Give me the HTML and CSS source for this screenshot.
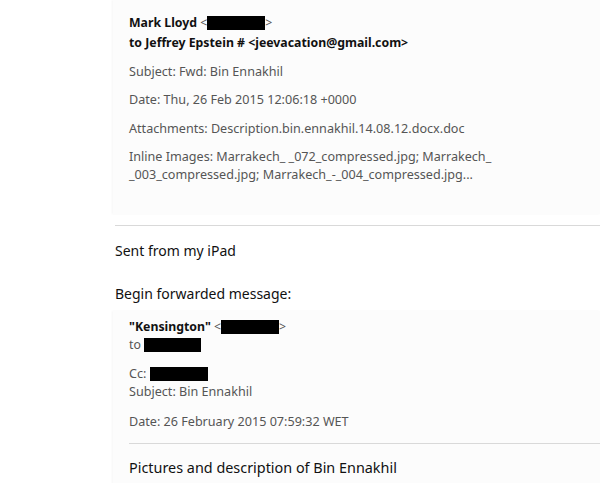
FILE: index.html
```html
<!DOCTYPE html>
<html lang="en">
<head>
  <meta charset="UTF-8">
  <title>Fwd: Bin Ennakhil</title>
  <link rel="stylesheet" href="styles.css">
</head>
<body>
  <div class="thread">
    <div class="quote-box first">
      <div class="from-line"><b>Mark Lloyd</b> &lt;<span class="redact w58"></span>&gt;</div>
      <div class="from-line to"><b>to Jeffrey Epstein # &lt;jeevacation@gmail.com&gt;</b></div>
      <p class="meta">Subject: Fwd: Bin Ennakhil</p>
      <p class="meta">Date: Thu, 26 Feb 2015 12:06:18 +0000</p>
      <p class="meta">Attachments: Description.bin.ennakhil.14.08.12.docx.doc</p>
      <p class="meta">Inline Images: Marrakech_ _072_compressed.jpg; Marrakech_ _003_compressed.jpg; Marrakech_-_004_compressed.jpg...</p>
    </div>
    <hr class="rule">
    <p class="body-text">Sent from my iPad</p>
    <p class="body-text fwd">Begin forwarded message:</p>
    <div class="quote-box second">
      <div class="from-line"><b>"Kensington"</b> &lt;<span class="redact w58"></span>&gt;</div>
      <div class="from-line plain">to <span class="redact w57"></span></div>
      <div class="meta-group">
        <div class="meta-line">Cc: <span class="redact w58"></span></div>
        <div class="meta-line">Subject: Bin Ennakhil</div>
      </div>
      <p class="meta date">Date: 26 February 2015 07:59:32 WET</p>
      <hr class="rule inner">
      <p class="body-text">Pictures and description of Bin Ennakhil</p>
    </div>
  </div>
</body>
</html>
```

FILE: styles.css
```css
body {
  margin: 0;
  background-color: #ffffff;
  font-family: "Noto Sans", "Open Sans", sans-serif;
  color: #111;
}
.thread {
  padding-left: 115px;
}
.quote-box {
  background-color: #fcfcfc;
  box-shadow: -1px 0 2px rgba(0, 0, 0, 0.04);
  padding: 14px 0 0 16px;
}
.quote-box.first {
  height: 200px;
  margin-left: -2px;
}
.quote-box.second {
  margin-left: -2px;
  margin-top: 8px;
  padding-top: 7px;
  padding-bottom: 20px;
}
.from-line {
  font-size: 12.3px;
  line-height: 18px;
  color: #555;
}
.from-line b {
  color: #111;
}
.from-line.to {
  margin-top: 2px;
}
.meta {
  max-width: 368px;
  margin: 10.6px 0 0;
  font-size: 12.6px;
  line-height: 18px;
  color: #555;
}
.meta.date {
  margin-top: 12px;
}
.meta-group {
  margin-top: 11px;
  font-size: 12.6px;
  line-height: 18px;
  color: #555;
}
.redact {
  display: inline-block;
  height: 14px;
  margin-top: 2px;
  background-color: #000;
  vertical-align: top;
}
.w58 { width: 58px; }
.w57 { width: 57px; }
.rule {
  border: 0;
  border-top: 1px solid #d9d9d9;
  margin: 11px 0 0;
}
.rule.inner {
  margin: 12px 0 0;
}
.body-text {
  margin: 16px 0 0;
  font-size: 14px;
  line-height: 18px;
  color: #111;
}
.body-text.fwd {
  margin-top: 25px;
}
.quote-box .body-text {
  margin-top: 15px;
  font-size: 14.4px;
}
```
